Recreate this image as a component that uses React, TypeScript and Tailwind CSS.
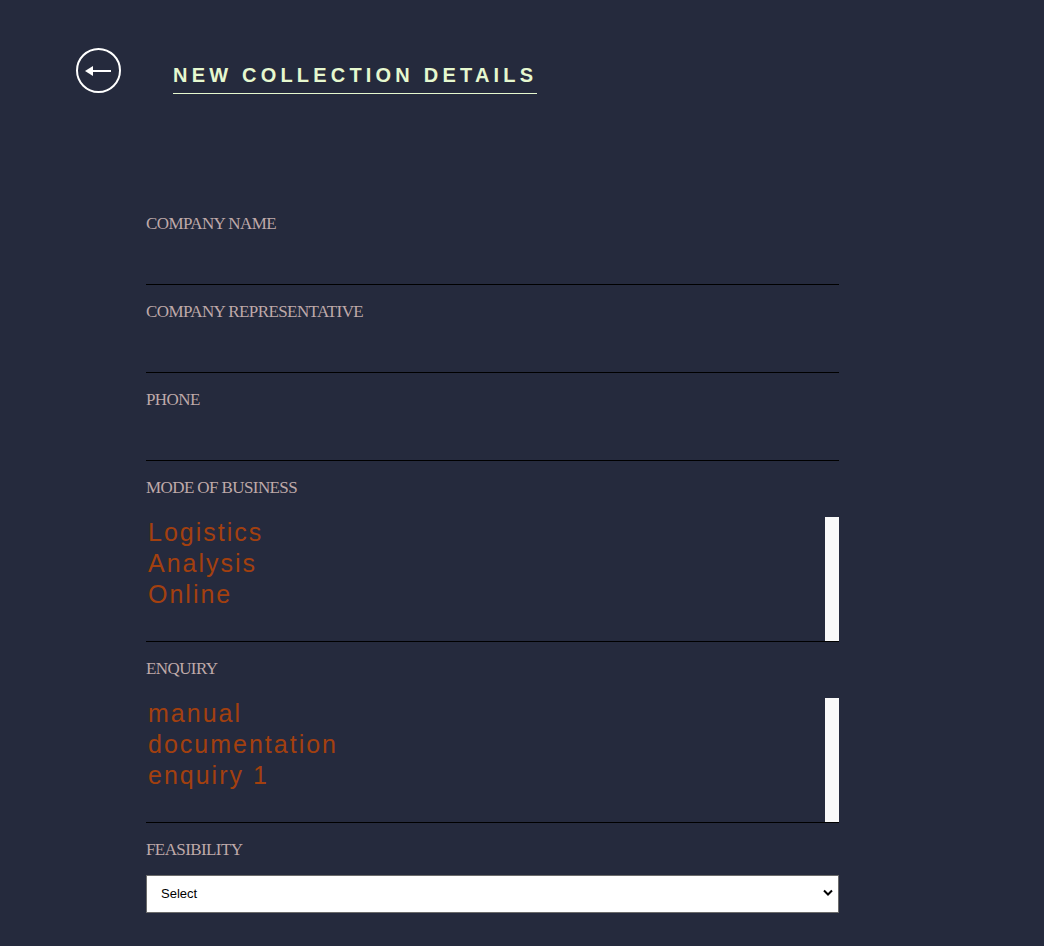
import { useState } from "react";

const labelCls =
  "block text-[17px] leading-[22px] tracking-[-0.035em] text-[#bfa9a9] [font-family:'Liberation_Serif',serif]";

function TextField({ label }: { label: string }) {
  return (
    <div className="mb-[16px]">
      <label className={labelCls}>{label}</label>
      <input
        type="text"
        className="block h-[50px] w-full border-b border-black bg-transparent text-[18px] text-white outline-none"
      />
    </div>
  );
}

function ListField({ label, options }: { label: string; options: string[] }) {
  return (
    <div className="mb-[16px]">
      <label className={labelCls}>{label}</label>
      <div className="mt-[18px] flex h-[125px] border-b border-black">
        <ul className="flex-1 pl-[2px] text-[25px] leading-[31px] tracking-[0.08em] text-[#a3400f] [font-family:'Liberation_Sans',Arial,sans-serif]">
          {options.map((o) => (
            <li key={o}>{o}</li>
          ))}
        </ul>
        <div className="w-[14px] bg-[#f9f9f9]" />
      </div>
    </div>
  );
}

export default function App() {
  const [feasibility, setFeasibility] = useState("");

  return (
    <div className="min-h-[946px] bg-[#252a3d] [font-family:'Liberation_Sans',Arial,sans-serif]">
      <header className="flex items-start pl-[76px] pt-[48px]">
        <button className="flex h-[45px] w-[45px] items-center justify-center rounded-full border-2 border-white">
          <svg width="27" height="12" viewBox="0 0 27 12">
            <path d="M0 6 L8 1 L8 11 Z" fill="white" />
            <line x1="6" y1="6" x2="26" y2="6" stroke="white" strokeWidth="2" />
          </svg>
        </button>
        <h1 className="ml-[52px] mt-[16px] border-b border-[#e6f8cf] pb-[6px] text-[20px] font-bold leading-[23px] tracking-[0.21em] text-[#e6f8cf]">
          NEW COLLECTION DETAILS
        </h1>
      </header>

      <form className="ml-[146px] mt-[119px] w-[693px] pb-[34px]">
        <TextField label="COMPANY NAME" />
        <TextField label="COMPANY REPRESENTATIVE" />
        <TextField label="PHONE" />
        <ListField label="MODE OF BUSINESS" options={["Logistics", "Analysis", "Online"]} />
        <ListField label="ENQUIRY" options={["manual", "documentation", "enquiry 1"]} />
        <div>
          <label className={labelCls}>FEASIBILITY</label>
          <div className="relative mt-[14px]">
            <select
              value={feasibility}
              onChange={(e) => setFeasibility(e.target.value)}
              className="block h-[38px] w-full appearance-none border border-[#6b6b6b] bg-white pl-[14px] text-[13px] text-black outline-none"
            >
              <option value="">Select</option>
              <option value="yes">Yes</option>
              <option value="no">No</option>
            </select>
            <svg
              className="pointer-events-none absolute right-[6px] top-[14px]"
              width="10"
              height="8"
              viewBox="0 0 10 8"
            >
              <path d="M1 1.5 L5 5.5 L9 1.5" fill="none" stroke="black" strokeWidth="2" />
            </svg>
          </div>
        </div>
      </form>
    </div>
  );
}
